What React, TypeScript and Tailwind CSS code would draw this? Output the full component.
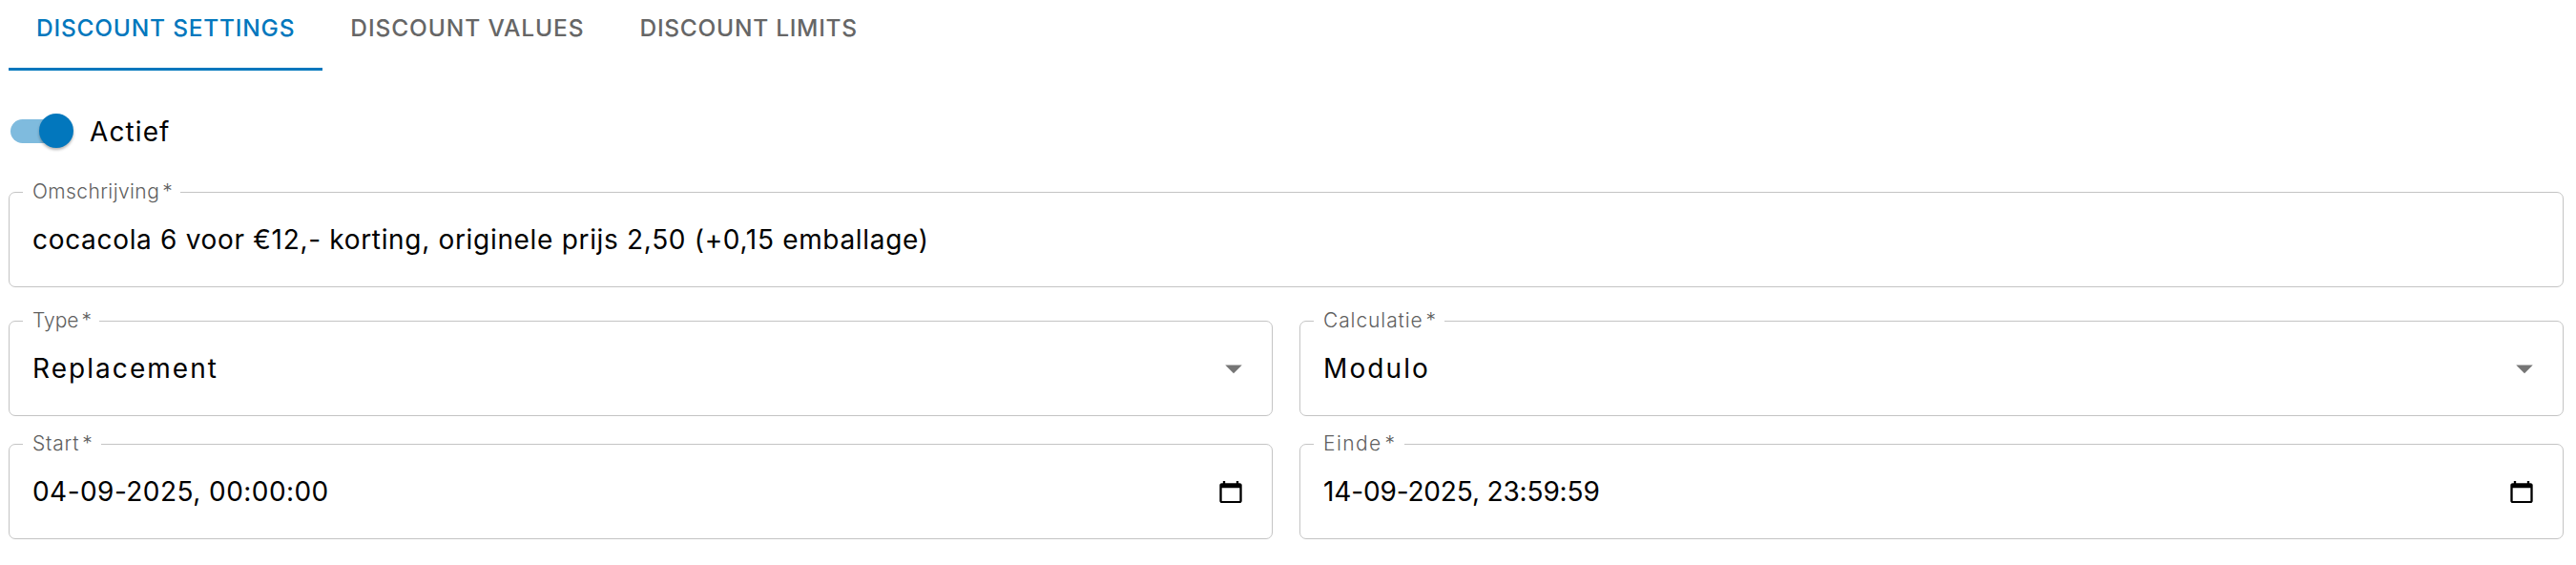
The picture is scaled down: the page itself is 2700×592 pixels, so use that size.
import React from 'react';

const Field = ({ label, labelClass, value, valueClass, children }: { label: string; labelClass: string; value: string; valueClass: string; children?: React.ReactNode }) => (
  <div className="relative flex h-[100px] items-center justify-between rounded-[7px] border border-[#c4c4c4] pl-[24px] pr-[29px]">
    <span className={`absolute left-[14px] top-[-14px] bg-white pl-[10px] pr-[8px] text-[21px] font-light leading-[26px] text-[#5f5f5f] ${labelClass}`}>
      {label}
      <span className="ml-[3px]">*</span>
    </span>
    <span className={`text-[28px] leading-[34px] text-black ${valueClass}`}>{value}</span>
    {children}
  </div>
);

const Caret = () => (
  <svg width="42" height="42" viewBox="0 0 24 24" className="mr-[-10px] shrink-0" fill="#757575">
    <path d="M7 10l5 5 5-5z" />
  </svg>
);

const CalendarIcon = () => (
  <svg width="28" height="25" viewBox="0 0 24 24" preserveAspectRatio="none" className="shrink-0" fill="#000000">
    <path d="M20 3h-1V1h-2v2H7V1H5v2H4c-1.1 0-2 .9-2 2v16c0 1.1.9 2 2 2h16c1.1 0 2-.9 2-2V5c0-1.1-.9-2-2-2zm0 18H4V8h16v13z" />
  </svg>
);

export default function App() {
  return (
    <div className="h-[592px] overflow-hidden bg-white pl-[9px] pr-[13px] font-['Inter',sans-serif]">
      {/* Tabs */}
      <div className="flex h-[74px]">
        <div className="flex h-full items-center border-b-[3px] border-[#0277bd] px-[29px] pb-[12px] text-[24.5px] font-medium tracking-[0.78px] text-[#0277bd]">
          DISCOUNT SETTINGS
        </div>
        <div className="flex h-full items-center px-[29px] pb-[15px] text-[24.5px] font-medium tracking-[0.9px] text-[#666666]">
          DISCOUNT VALUES
        </div>
        <div className="flex h-full items-center px-[29px] pb-[15px] text-[24.5px] font-medium tracking-[0.72px] text-[#666666]">
          DISCOUNT LIMITS
        </div>
      </div>

      {/* Actief switch */}
      <div className="mb-[45px] mt-[45px] flex h-[37px] items-center pl-[2px]">
        <div className="relative h-[25px] w-[60px] rounded-full bg-[#7fbbde]">
          <div className="absolute right-[-6px] top-[-6px] h-[36px] w-[36px] rounded-full bg-[#0277bd] shadow-[0_2px_3px_rgba(0,0,0,0.3)]" />
        </div>
        <span className="ml-[23px] text-[28px] leading-[34px] tracking-[1.1px] text-black">Actief</span>
      </div>

      <Field
        label="Omschrijving"
        labelClass="tracking-[0.4px]"
        value="cocacola 6 voor €12,- korting, originele prijs 2,50 (+0,15 emballage)"
        valueClass="tracking-[0.68px]"
      />

      <div className="mt-[35px] grid grid-cols-2 gap-x-[28px] gap-y-[29px]">
        <Field label="Type" labelClass="tracking-[0px]" value="Replacement" valueClass="tracking-[2.05px]">
          <Caret />
        </Field>
        <Field label="Calculatie" labelClass="tracking-[0.9px]" value="Modulo" valueClass="tracking-[2.1px]">
          <Caret />
        </Field>
        <Field label="Start" labelClass="tracking-[0.8px]" value="04-09-2025, 00:00:00" valueClass="tracking-[0.45px]">
          <CalendarIcon />
        </Field>
        <Field label="Einde" labelClass="tracking-[1.4px]" value="14-09-2025, 23:59:59" valueClass="tracking-[-0.15px]">
          <CalendarIcon />
        </Field>
      </div>
    </div>
  );
}
